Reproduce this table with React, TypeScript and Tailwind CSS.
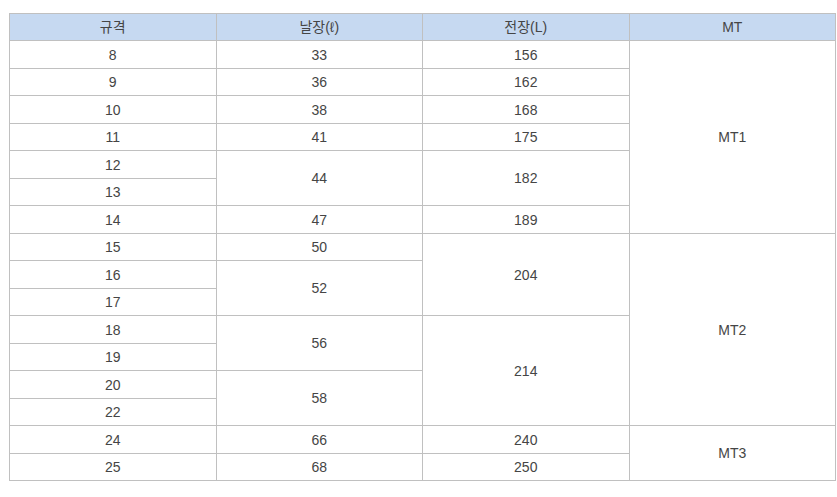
import React from 'react';

type Cell = { text: string; span?: number };
type Row = Cell[];

// each row lists only the cells that start on that row
const rows: Row[] = [
  [{ text: '8' }, { text: '33' }, { text: '156' }, { text: 'MT1', span: 7 }],
  [{ text: '9' }, { text: '36' }, { text: '162' }],
  [{ text: '10' }, { text: '38' }, { text: '168' }],
  [{ text: '11' }, { text: '41' }, { text: '175' }],
  [{ text: '12' }, { text: '44', span: 2 }, { text: '182', span: 2 }],
  [{ text: '13' }],
  [{ text: '14' }, { text: '47' }, { text: '189' }],
  [{ text: '15' }, { text: '50' }, { text: '204', span: 3 }, { text: 'MT2', span: 7 }],
  [{ text: '16' }, { text: '52', span: 2 }],
  [{ text: '17' }],
  [{ text: '18' }, { text: '56', span: 2 }, { text: '214', span: 4 }],
  [{ text: '19' }],
  [{ text: '20' }, { text: '58', span: 2 }],
  [{ text: '22' }],
  [{ text: '24' }, { text: '66' }, { text: '240' }, { text: 'MT3', span: 2 }],
  [{ text: '25' }, { text: '68' }, { text: '250' }],
];

const headers = ['규격', '날장(ℓ)', '전장(L)', 'MT'];

const App: React.FC = () => {
  return (
    <div
      className="w-[837px] h-[497px] bg-white pt-[13px] pl-[9px]"
      style={{ fontFamily: '"Liberation Sans", Arial, "Noto Sans CJK KR", sans-serif' }}
    >
      <table className="w-[827px] border-collapse table-fixed text-[14px] text-[#454545]">
        <thead>
          <tr className="h-[27px]">
            {headers.map((h) => (
              <th
                key={h}
                className="border border-[#c0c0c0] bg-[#c6d9f1] font-normal text-center p-0 leading-none"
              >
                {h}
              </th>
            ))}
          </tr>
        </thead>
        <tbody>
          {rows.map((row, i) => (
            <tr key={i} className={i % 2 === 0 ? 'h-[28px]' : 'h-[27px]'}>
              {row.map((c) => (
                <td
                  key={c.text}
                  rowSpan={c.span}
                  className="border border-[#c0c0c0] text-center p-0 leading-none"
                >
                  {c.text}
                </td>
              ))}
            </tr>
          ))}
        </tbody>
      </table>
    </div>
  );
};

export default App;
